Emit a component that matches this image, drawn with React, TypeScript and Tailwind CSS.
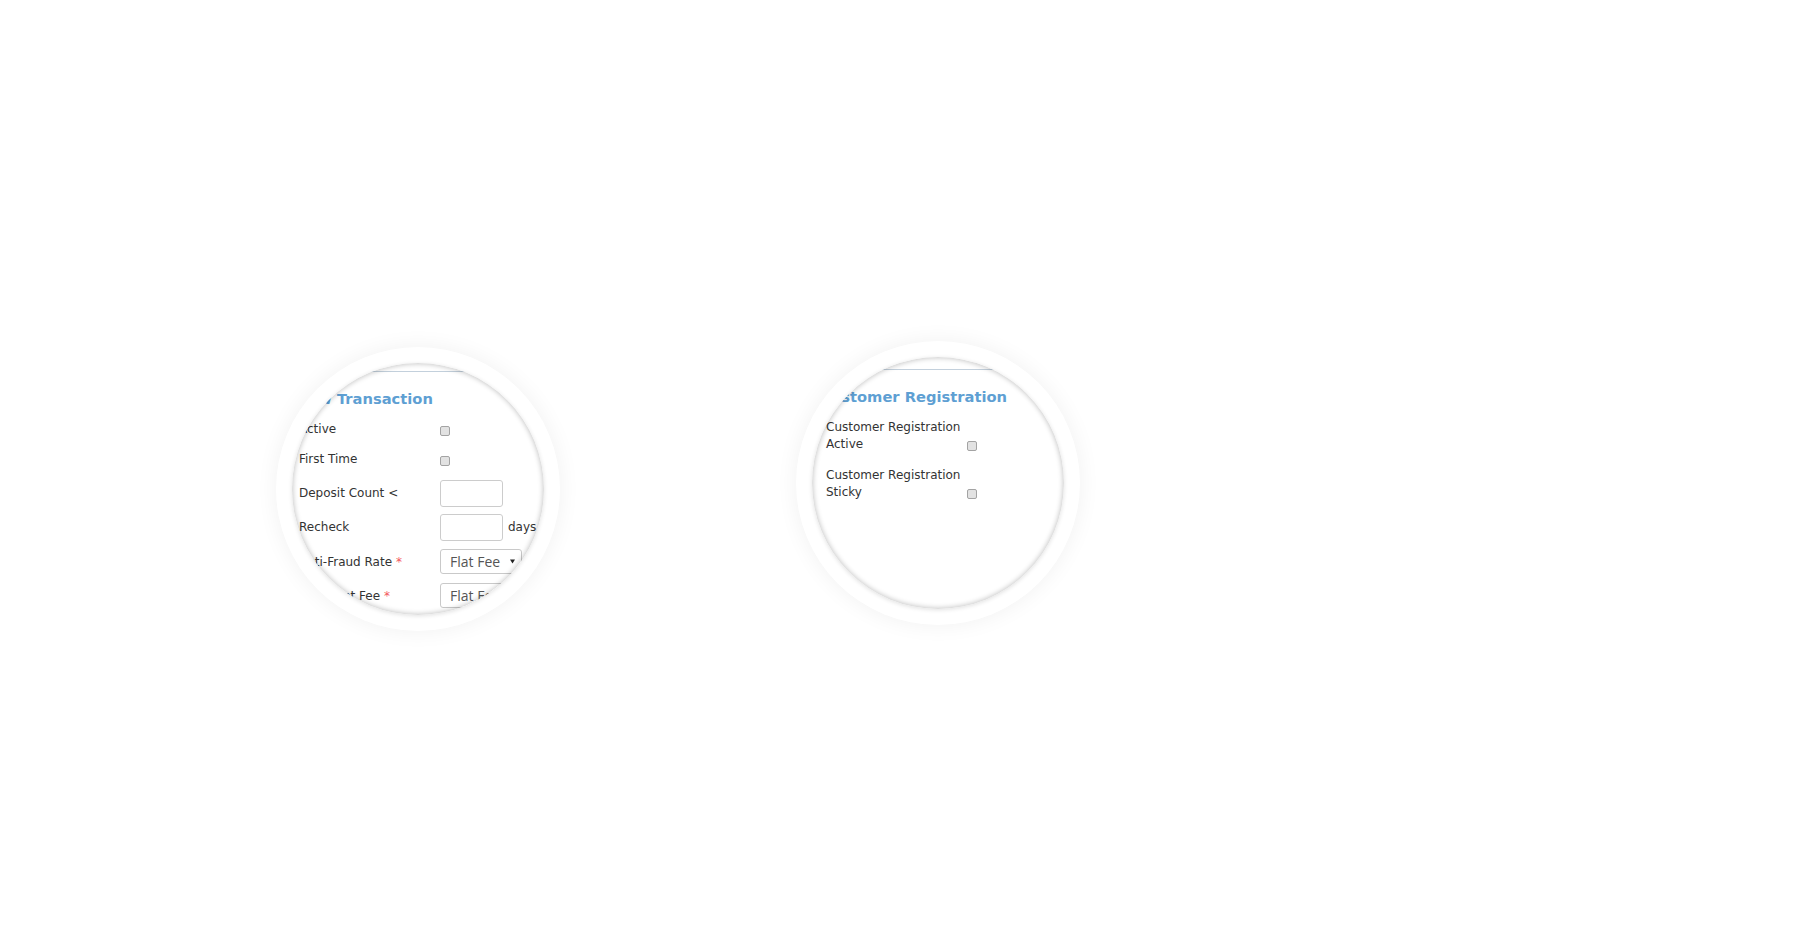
import type { ReactNode } from "react";

const labelText = "font-['DejaVu_Sans',Verdana,sans-serif] text-[12px] leading-[17px] text-[#333]";
const headingText = "font-['DejaVu_Sans',Verdana,sans-serif] font-bold text-[14.7px] leading-[18px] text-[#5e9fd3] whitespace-nowrap";

function Lens({ children, className = "" }: { children: ReactNode; className?: string }) {
  return (
    <div
      className={`w-[284px] h-[284px] shrink-0 rounded-full bg-white shadow-[0_0_22px_rgba(0,0,0,0.06)] flex items-center justify-center ${className}`}
    >
      <div className="relative w-[252px] h-[252px] rounded-full overflow-hidden bg-white shadow-[0_1px_4px_rgba(0,0,0,0.12)]">
        {children}
        <div className="absolute inset-0 rounded-full shadow-[inset_0_0_5px_1px_rgba(0,0,0,0.22)] pointer-events-none" />
      </div>
    </div>
  );
}

function Checkbox({ className = "" }: { className?: string }) {
  return (
    <span className={`block w-[10px] h-[10px] shrink-0 rounded-[2px] border border-[#a3a3a3] bg-[#e2e2e2] ${className}`} />
  );
}

function TextBox() {
  return <div className="w-[63px] h-[27px] rounded-[3px] border border-[#cccccc] bg-white" />;
}

function Select() {
  return (
    <div className="w-[82px] h-[25px] shrink-0 rounded-[3px] border border-[#c9c9c9] bg-white flex items-center pl-[9px] pr-[6px] font-['Open_Sans',sans-serif] text-[14px] text-[#555] whitespace-nowrap">
      <span className="flex-1">Flat Fee</span>
      <svg width="5" height="5" viewBox="0 0 5 5">
        <path d="M0 0.5h5L2.5 4.5z" fill="#222" />
      </svg>
    </div>
  );
}

function Required() {
  return <span className="ml-[4px] text-[#f3565d]">*</span>;
}

export default function App() {
  return (
    <div className="min-h-[941px] w-full bg-white flex items-start pl-[276px] pt-[341px] gap-[236px]">
      {/* NEW TRANSACTION */}
      <Lens className="mt-[6px]">
        <div className="pt-[8px]">
          <div className="h-px bg-[#c3d0dc]" />
          <h3 className={`mt-[18px] pl-[4px] ${headingText}`}>New Transaction</h3>
          <div className="pl-[7px] whitespace-nowrap">
            <div className="mt-[10px] h-[20px] flex items-center">
              <span className={`w-[141px] shrink-0 pt-[3px] ${labelText}`}>Active</span>
              <Checkbox className="mt-[5px]" />
            </div>
            <div className="mt-[10px] h-[20px] flex items-center">
              <span className={`w-[141px] shrink-0 pt-[3px] ${labelText}`}>First Time</span>
              <Checkbox className="mt-[5px]" />
            </div>
            <div className="mt-[12px] h-[27px] flex items-center">
              <span className={`w-[141px] shrink-0 ${labelText}`}>Deposit Count &lt;</span>
              <TextBox />
            </div>
            <div className="mt-[7px] h-[27px] flex items-center">
              <span className={`w-[141px] shrink-0 ${labelText}`}>Recheck</span>
              <TextBox />
              <span className={`ml-[5px] ${labelText}`}>days</span>
            </div>
            <div className="mt-[8px] h-[25px] flex items-center">
              <span className={`w-[141px] shrink-0 pt-[1px] ${labelText}`}>
                Anti-Fraud Rate
                <Required />
              </span>
              <Select />
            </div>
            <div className="mt-[9px] h-[25px] flex items-center">
              <span className={`w-[141px] shrink-0 pt-[2px] ${labelText}`}>
                Merchant Fee
                <Required />
              </span>
              <Select />
            </div>
          </div>
        </div>
      </Lens>

      {/* CUSTOMER REGISTRATION */}
      <Lens>
        <div className="pt-[12px]">
          <div className="h-px bg-[#c3d0dc]" />
          <h3 className={`mt-[18px] pl-[8px] ${headingText}`}>Customer Registration</h3>
          <div className="pl-[14px]">
            <div className="mt-[13px] flex items-end">
              <span className={`w-[141px] shrink-0 ${labelText}`}>Customer Registration Active</span>
              <Checkbox className="mb-[2px]" />
            </div>
            <div className="mt-[14px] flex items-end">
              <span className={`w-[141px] shrink-0 ${labelText}`}>Customer Registration Sticky</span>
              <Checkbox className="mb-[2px]" />
            </div>
          </div>
        </div>
      </Lens>
    </div>
  );
}
